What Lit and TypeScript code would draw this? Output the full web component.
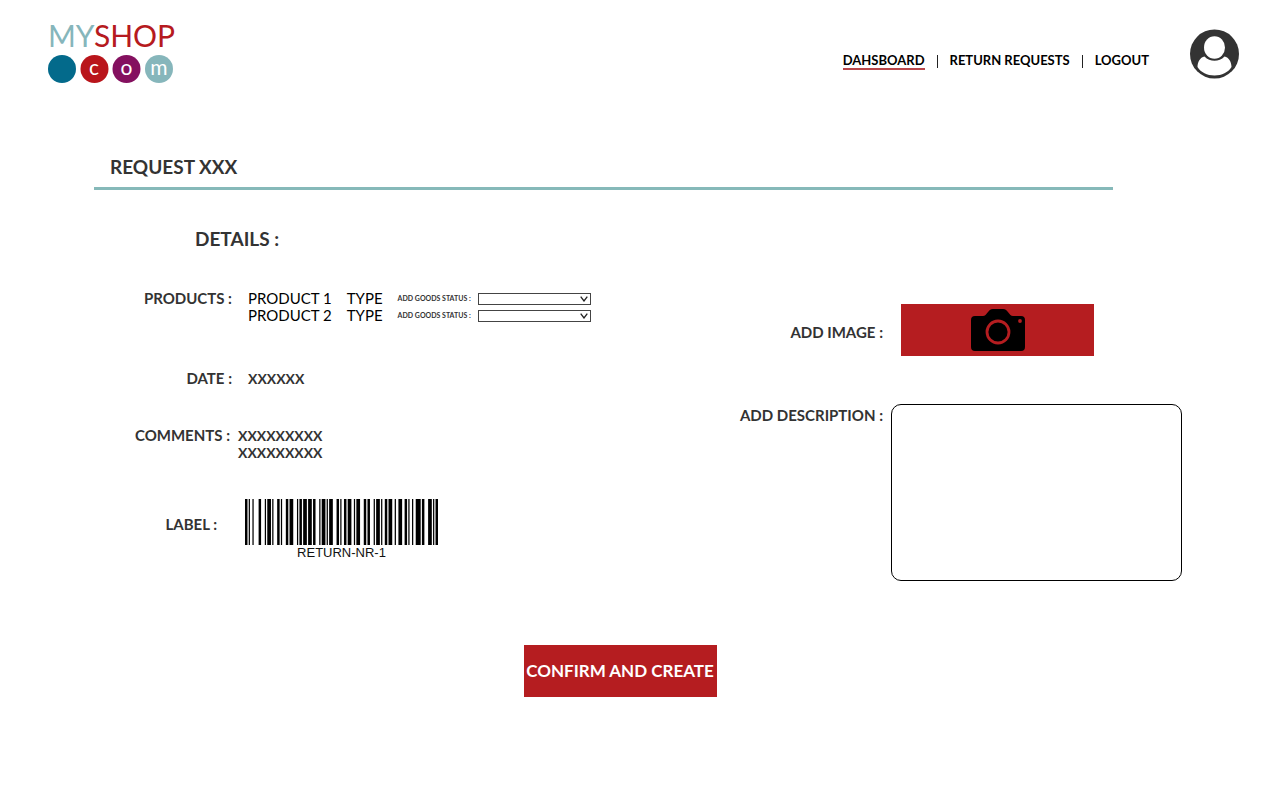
import { LitElement, html, svg, css } from "lit";
import { customElement, property } from "lit/decorators.js";

/* Code 128 (set B) element widths for the symbols used on return labels. */
const CODE128: Record<number, string> = {
  13: "122132", 17: "123221", 37: "132113", 46: "113321", 50: "231131",
  52: "213311", 53: "213131", 82: "121241",
};
const START_B = "211214";
const STOP = "2331112";

@customElement("bar-code")
export class BarCode extends LitElement {
  @property() value = "";

  static styles = css`
    :host { display: block; width: 193px; }
    .bars { display: block; width: 100%; height: 46px; }
    .text {
      text-align: center;
      font: 13px/15px "Liberation Sans", Arial, sans-serif;
      color: #111;
    }
  `;

  private pattern() {
    const codes = [...this.value].map((c) => c.charCodeAt(0) - 32);
    const check = codes.reduce((sum, c, i) => sum + c * (i + 1), 104) % 103;
    return START_B + [...codes, check].map((c) => CODE128[c] ?? "").join("") + STOP;
  }

  render() {
    let x = 0;
    const bars: { x: number; w: number }[] = [];
    [...this.pattern()].forEach((d, i) => {
      if (i % 2 === 0) bars.push({ x, w: Number(d) });
      x += Number(d);
    });
    return html`
      <svg class="bars" viewBox="0 0 ${x} 46" preserveAspectRatio="none" aria-hidden="true">
        ${bars.map((b) => svg`<rect x=${b.x} y="0" width=${b.w} height="46" fill="#000"></rect>`)}
      </svg>
      <div class="text">${this.value}</div>
    `;
  }
}

@customElement("shop-header")
export class ShopHeader extends LitElement {
  static styles = css`
    :host { display: block; }
    .bar {
      display: flex;
      align-items: flex-start;
      justify-content: space-between;
      padding: 14px 41px 0 44px;
    }
    .logo { display: block; width: 134px; height: 70px; }
    .right { display: flex; align-items: flex-start; padding-top: 15px; }
    .nav { display: flex; align-items: center; padding-top: 23px; margin-right: 40px; }
    .link {
      font-size: 13px;
      line-height: 16px;
      font-weight: 700;
      color: #000;
      text-decoration: none;
      border-bottom: 2px solid transparent;
    }
    .link.active { border-color: #b9474b; }
    .sep { width: 1px; height: 13px; background: #222; margin: 0 12px; }
    .avatar { display: block; width: 50px; height: 50px; }
  `;

  render() {
    return html`
      <header class="bar">
        <svg class="logo" viewBox="-4 -10 134 70" role="img" aria-label="MyShop.com" font-family="Lato, sans-serif">
          <text x="0" y="23" font-size="30"><tspan fill="#86b6bb">MY</tspan><tspan fill="#b61a20">SHOP</tspan></text>
          <circle cx="14" cy="45" r="14" fill="#036a8b"></circle>
          <circle cx="46.500" cy="45" r="14" fill="#b9151b"></circle>
          <circle cx="78.500" cy="45" r="14" fill="#84105f"></circle>
          <circle cx="111" cy="45" r="14" fill="#86b6bb"></circle>
          <g fill="#fff" font-size="21" text-anchor="middle">
            <text x="46" y="51">c</text>
            <text x="78.500" y="51">o</text>
            <text x="111" y="51">m</text>
          </g>
        </svg>
        <div class="right">
          <nav class="nav">
            <a class="link active" href="#dashboard">DAHSBOARD</a>
            <span class="sep"></span>
            <a class="link" href="#returns">RETURN REQUESTS</a>
            <span class="sep"></span>
            <a class="link" href="#logout">LOGOUT</a>
          </nav>
          <svg class="avatar" viewBox="0 0 50 50" role="img" aria-label="Account">
            <circle cx="25.500" cy="25" r="24.500" fill="#333"></circle>
            <ellipse cx="25.500" cy="18.500" rx="10.500" ry="11.200" fill="#fff"></ellipse>
            <path d="M15.500 27.500C21 33.300 30 33.300 35.500 27.500C40 28.500 42.500 33 42.500 38C39 43.500 33 46.500 25.500 46.500C18 46.500 12 43.500 8.500 38C8.500 33 11 28.500 15.500 27.500Z" fill="#fff"></path>
          </svg>
        </div>
      </header>
    `;
  }
}

@customElement("app-root")
export class AppRoot extends LitElement {
  static styles = css`
    :host {
      display: block;
      min-height: 100vh;
      background: #fff;
      color: #333;
      font-family: Lato, "Open Sans", sans-serif;
    }
    .page { padding: 70px 98px 40px 94px; }
    .title {
      margin: 0 69px 0 0;
      padding: 0 16px 7px;
      border-bottom: 3px solid #86b9b9;
      font-size: 19px;
      line-height: 26px;
      font-weight: 700;
    }
    .columns {
      display: flex;
      justify-content: space-between;
      align-items: flex-start;
      padding-top: 36px;
    }
    .subtitle {
      margin: 0 0 38px 101px;
      font-size: 19px;
      line-height: 26px;
      font-weight: 700;
    }
    .details { margin: 0; display: flex; flex-direction: column; }
    .row { display: flex; gap: 16px; margin-bottom: 46px; }
    .row.date { margin-bottom: 40px; }
    .row.comments { gap: 8px; margin-bottom: 38px; }
    .row.code { gap: 28px; margin: 0; }
    .label, .value {
      margin: 0;
      font-size: 15px;
      line-height: 17px;
      font-weight: 700;
    }
    .value { font-size: 14px; }
    .label { width: 138px; text-align: right; white-space: nowrap; }
    .row.comments .label { width: 136px; }
    .row.code .label { width: 123px; padding-top: 17px; }
    .products {
      display: grid;
      grid-template-columns: auto auto auto auto;
      align-items: center;
      font-size: 15px;
      line-height: 17px;
      font-weight: 400;
      color: #000;
    }
    .type { margin: 0 15px; }
    .status { font-size: 7px; font-weight: 700; color: #333; margin-right: 7px; }
    .picker { position: relative; display: flex; }
    .select {
      appearance: none;
      width: 113px;
      height: 12px;
      padding: 0 14px 0 4px;
      border: 1px solid #444;
      border-radius: 0;
      background: #fff;
      font: 8px/10px Lato, sans-serif;
    }
    .chevron { position: absolute; right: 3px; top: 3px; width: 8px; height: 6px; pointer-events: none; }
    .form {
      display: grid;
      grid-template-columns: auto 291px;
      column-gap: 8px;
      row-gap: 48px;
      padding-top: 78px;
    }
    .field { font-size: 15px; line-height: 17px; font-weight: 700; text-align: right; }
    .field.image { align-self: center; padding-top: 4px; }
    .field.text { padding-top: 3px; }
    .upload {
      width: 193px;
      height: 52px;
      margin: 0 10px;
      padding: 0;
      border: 0;
      background: #b51d20;
      display: flex;
      align-items: center;
      justify-content: center;
    }
    .camera { display: block; width: 54px; height: 42px; }
    .description {
      box-sizing: border-box;
      width: 100%;
      height: 177px;
      padding: 8px;
      border: 1px solid #000;
      border-radius: 10px;
      background: #fff;
      resize: none;
      font: 15px/17px Lato, sans-serif;
    }
    .actions { display: flex; justify-content: center; padding: 64px 36px 0 0; }
    .confirm {
      width: 193px;
      height: 52px;
      padding: 0;
      border: 0;
      background: #b51d20;
      color: #fff;
      font: 700 17px/20px Lato, sans-serif;
      white-space: nowrap;
    }
  `;

  private products = ["PRODUCT 1", "PRODUCT 2"];

  render() {
    return html`
      <shop-header></shop-header>
      <main class="page">
        <h1 class="title">REQUEST XXX</h1>
        <div class="columns">
          <section>
            <h2 class="subtitle">DETAILS :</h2>
            <dl class="details">
              <div class="row">
                <dt class="label">PRODUCTS :</dt>
                <dd class="value products">
                  ${this.products.map((name, i) => html`
                    <span>${name}</span>
                    <span class="type">TYPE</span>
                    <label class="status" for="status-${i}">ADD GOODS STATUS :</label>
                    <span class="picker">
                      <select class="select" id="status-${i}"><option></option></select>
                      <svg class="chevron" viewBox="0 0 8 6" aria-hidden="true">
                        <path d="M.7.700 4 5 7.300.700" fill="none" stroke="#222" stroke-width="1.300"></path>
                      </svg>
                    </span>
                  `)}
                </dd>
              </div>
              <div class="row date">
                <dt class="label">DATE :</dt>
                <dd class="value">XXXXXX</dd>
              </div>
              <div class="row comments">
                <dt class="label">COMMENTS :</dt>
                <dd class="value">XXXXXXXXX<br />XXXXXXXXX</dd>
              </div>
              <div class="row code">
                <dt class="label">LABEL :</dt>
                <dd class="value"><bar-code value="RETURN-NR-1"></bar-code></dd>
              </div>
            </dl>
          </section>
          <form class="form">
            <label class="field image" for="image">ADD IMAGE :</label>
            <button class="upload" id="image" type="button" aria-label="Add image">
              <svg class="camera" viewBox="0 0 54 42" aria-hidden="true">
                <path d="M4 7H12C16 7 17 0 22 0H32C37 0 38 7 42 7H50Q54 7 54 11V38Q54 42 50 42H4Q0 42 0 38V11Q0 7 4 7Z" fill="#000"></path>
                <circle cx="27" cy="23" r="11" fill="none" stroke="#b51d20" stroke-width="2.800"></circle>
                <circle cx="49" cy="12" r="1.900" fill="#b51d20"></circle>
              </svg>
            </button>
            <label class="field text" for="description">ADD DESCRIPTION :</label>
            <textarea class="description" id="description"></textarea>
          </form>
        </div>
        <div class="actions">
          <button class="confirm" type="button">CONFIRM AND CREATE</button>
        </div>
      </main>
    `;
  }
}
